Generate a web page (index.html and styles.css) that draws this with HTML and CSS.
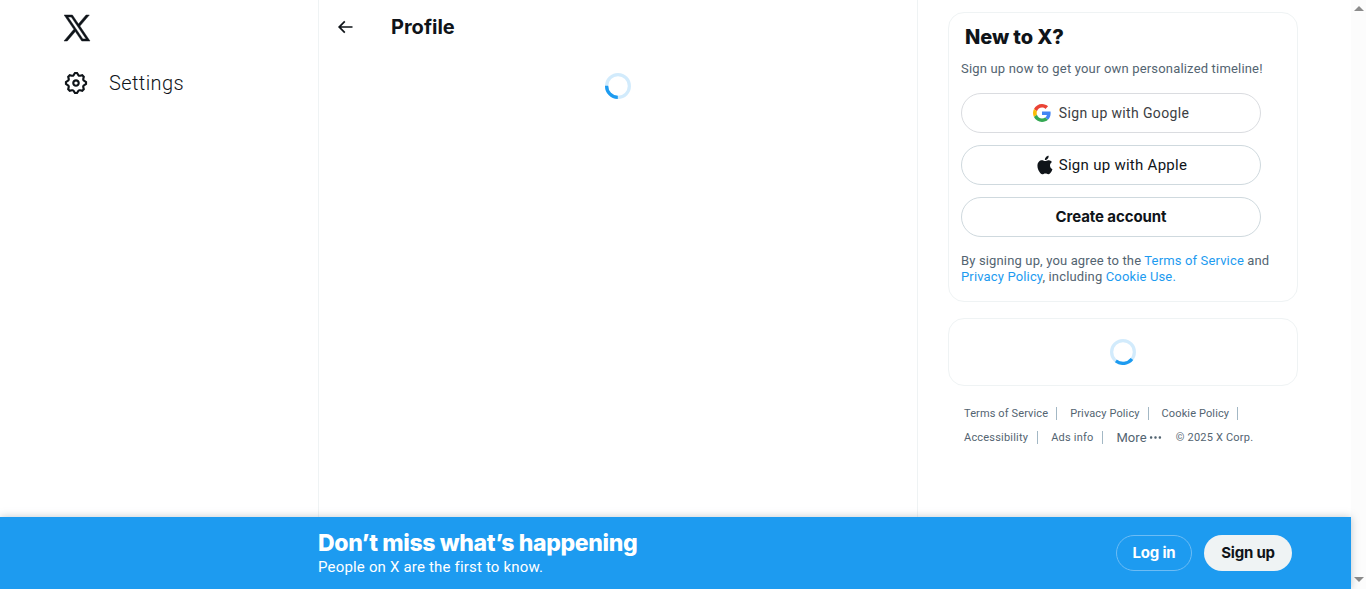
FILE: index.html
```html
<!DOCTYPE html>
<html lang="en">
<head>
<meta charset="utf-8">
<title>Profile / X</title>
<link rel="stylesheet" href="styles.css">
</head>
<body>
<div class="page">
  <div class="layout">
    <header class="nav">
      <svg class="logo" viewBox="0 0 24 24"><path d="M21.742 21.75l-7.563-11.179 7.056-8.321h-2.456l-5.691 6.714-4.54-6.714H2.359l7.29 10.776L2.25 21.75h2.456l6.035-7.118 4.818 7.118h6.191-.008zM7.739 3.818L18.81 20.182h-2.447L5.29 3.818h2.447z"/></svg>
      <a class="nav-item">
        <svg class="gear" viewBox="0 0 24 24"><path d="M10.54 1.75h2.92l1.57 2.36c.11.17.32.25.53.21l2.53-.59 2.17 2.17-.58 2.54c-.05.2.04.41.21.53l2.36 1.57v2.92l-2.36 1.57c-.17.12-.26.33-.21.53l.58 2.54-2.17 2.17-2.53-.59c-.21-.04-.42.04-.53.21l-1.57 2.36h-2.92l-1.58-2.36c-.11-.17-.32-.25-.52-.21l-2.54.59-2.17-2.17.58-2.54c.05-.2-.03-.41-.21-.53l-2.35-1.57v-2.92L4.1 8.97c.18-.12.26-.33.21-.53L3.73 5.9 5.9 3.73l2.54.59c.2.04.41-.04.52-.21l1.58-2.36zm1.07 2l-.98 1.47C10.05 6.08 9 6.5 7.99 6.27l-1.46-.34-.6.6.33 1.46c.24 1.01-.18 2.07-1.05 2.64l-1.46.98v.78l1.46.98c.87.57 1.29 1.63 1.05 2.64l-.33 1.46.6.6 1.46-.34c1.01-.23 2.06.19 2.64 1.05l.98 1.47h.78l.97-1.47c.58-.86 1.63-1.28 2.65-1.05l1.45.34.61-.6-.34-1.46c-.23-1.01.18-2.07 1.05-2.64l1.47-.98v-.78l-1.47-.98c-.87-.57-1.28-1.63-1.05-2.64l.34-1.46-.61-.6-1.45.34c-1.02.23-2.07-.19-2.65-1.05l-.97-1.47h-.78zM12 10.5c-.83 0-1.5.67-1.5 1.5s.67 1.5 1.5 1.5c.82 0 1.5-.67 1.5-1.5s-.68-1.5-1.5-1.5zM8.5 12c0-1.93 1.56-3.5 3.5-3.5 1.93 0 3.5 1.57 3.5 3.5s-1.57 3.5-3.5 3.5c-1.94 0-3.5-1.57-3.5-3.5z"/></svg>
        <span>Settings</span>
      </a>
    </header>

    <main class="main">
      <div class="main-head">
        <svg class="back" viewBox="0 0 24 24"><path d="M7.414 13l5.043 5.04-1.414 1.42L3.586 12l7.457-7.46 1.414 1.42L7.414 11H21v2H7.414z"/></svg>
        <h2>Profile</h2>
      </div>
      <svg class="spinner" viewBox="0 0 32 32"><circle class="track" cx="16" cy="16" r="14"/><circle class="arc arc-left" cx="16" cy="16" r="14"/></svg>
    </main>

    <aside class="side">
      <section class="card signup">
        <h2>New to X?</h2>
        <p class="lead">Sign up now to get your own personalized timeline!</p>
        <a class="pill google">
          <svg viewBox="0 0 48 48"><path fill="#ea4335" d="M24 9.5c3.54 0 6.71 1.22 9.21 3.6l6.85-6.85C35.9 2.38 30.47 0 24 0 14.62 0 6.51 5.38 2.56 13.22l7.98 6.19C12.43 13.72 17.74 9.5 24 9.5z"/><path fill="#4285f4" d="M46.98 24.55c0-1.57-.15-3.09-.38-4.55H24v9.02h12.94c-.58 2.96-2.26 5.48-4.78 7.18l7.73 6c4.51-4.18 7.09-10.36 7.09-17.65z"/><path fill="#fbbc05" d="M10.53 28.59c-.48-1.45-.76-2.99-.76-4.59s.27-3.14.76-4.59l-7.98-6.19C.92 16.46 0 20.12 0 24c0 3.88.92 7.54 2.56 10.78l7.97-6.19z"/><path fill="#34a853" d="M24 48c6.48 0 11.93-2.13 15.89-5.81l-7.73-6c-2.15 1.45-4.92 2.3-8.16 2.3-6.26 0-11.57-4.22-13.47-9.91l-7.98 6.19C6.51 42.62 14.62 48 24 48z"/></svg>
          <span>Sign up with Google</span>
        </a>
        <a class="pill apple">
          <svg viewBox="0 0 24 24"><path d="M16.365 1.43c0 1.14-.493 2.27-1.177 3.08-.744.9-1.99 1.57-2.987 1.57-.12 0-.23-.02-.3-.03-.01-.06-.04-.22-.04-.39 0-1.15.572-2.27 1.206-2.98.804-.94 2.142-1.64 3.248-1.68.03.13.05.28.05.43zm4.565 15.71c-.03.07-.463 1.58-1.518 3.12-.945 1.34-1.94 2.71-3.43 2.71-1.517 0-1.9-.88-3.63-.88-1.698 0-2.302.91-3.67.91-1.377 0-2.332-1.26-3.428-2.8-1.287-1.82-2.323-4.63-2.323-7.28 0-4.28 2.797-6.55 5.552-6.55 1.448 0 2.675.95 3.6.95.865 0 2.222-1.01 3.902-1.01.613 0 2.886.06 4.374 2.19-.13.09-2.383 1.37-2.383 4.19 0 3.26 2.854 4.42 2.955 4.45z"/></svg>
          <span>Sign up with Apple</span>
        </a>
        <a class="pill create"><span>Create account</span></a>
        <p class="terms">By signing up, you agree to the <a>Terms of Service</a> and<br><a>Privacy Policy</a>, including <a>Cookie Use.</a></p>
      </section>

      <section class="card loading">
        <svg class="spinner" viewBox="0 0 32 32"><circle class="track" cx="16" cy="16" r="14"/><circle class="arc arc-bottom" cx="16" cy="16" r="14"/></svg>
      </section>

      <nav class="links">
        <div class="links-row"><a>Terms of Service</a><i></i><a>Privacy Policy</a><i></i><a>Cookie Policy</a><i></i></div>
        <div class="links-row second"><a>Accessibility</a><i></i><a>Ads info</a><i></i><a class="more">More<svg viewBox="0 0 24 24"><path d="M3 12c0-1.1.9-2 2-2s2 .9 2 2-.9 2-2 2-2-.9-2-2zm9 2c1.1 0 2-.9 2-2s-.9-2-2-2-2 .9-2 2 .9 2 2 2zm7 0c1.1 0 2-.9 2-2s-.9-2-2-2-2 .9-2 2 .9 2 2 2z"/></svg></a><span>© 2025 X Corp.</span></div>
      </nav>
    </aside>
  </div>

  <footer class="banner">
    <div class="banner-text">
      <strong>Don’t miss what’s happening</strong>
      <span>People on X are the first to know.</span>
    </div>
    <div class="banner-actions">
      <a class="login">Log in</a>
      <a class="join">Sign up</a>
    </div>
  </footer>
</div>
<div class="scrollbar"><b class="up"></b><b class="down"></b></div>
</body>
</html>
```
FILE: styles.css
```css
* { box-sizing: border-box; margin: 0; padding: 0; }
body {
  display: flex;
  width: 1366px;
  height: 589px;
  overflow: hidden;
  background: #fff;
  color: #0f1419;
  font-family: Roboto, "Liberation Sans", sans-serif;
}
svg { display: block; flex: none; fill: #0f1419; }
h2, strong, .create, .banner-actions { font-family: Inter, Roboto, sans-serif; }

.page { display: flex; flex-direction: column; width: 1351px; height: 589px; }
.layout { display: flex; height: 517px; }

.nav { width: 318px; padding: 12px 0 0 61px; }
.logo { width: 32px; height: 32px; stroke: #0f1419; stroke-width: .35; }
.nav-item { display: flex; align-items: center; gap: 20px; height: 52px; margin: 13px 0 0 2px; font-size: 20px; font-weight: 350; letter-spacing: .4px; }
.gear { width: 26px; height: 26px; }

.main { width: 600px; border: solid #eff3f4; border-width: 0 1px; }
.main-head { display: flex; align-items: center; height: 53px; padding-left: 16px; }
.back { width: 20px; height: 20px; }
.main-head h2 { margin-left: 36px; font-size: 20px; line-height: 24px; font-weight: 700; }
.spinner { width: 26px; height: 26px; fill: none; stroke: #1d9bf0; stroke-width: 4; }
.track { opacity: .2; }
.arc { stroke-dasharray: 22 66; }
.arc-left { transform: rotate(91deg); transform-origin: center; }
.arc-bottom { transform: rotate(38deg); transform-origin: center; }
.main .spinner { margin: 20px auto 0; }

.side { width: 350px; margin-left: 30px; padding-top: 12px; }
.card { border: 1px solid #eff3f4; border-radius: 16px; }
.signup { height: 290px; padding: 12px; }
.signup h2 { margin-left: 4px; font-size: 20px; line-height: 24px; font-weight: 800; letter-spacing: -.1px; }
.lead { margin: 12px 0 16px; color: #536471; font-size: 13px; line-height: 16px; letter-spacing: .18px; white-space: nowrap; }
.pill { display: flex; align-items: center; justify-content: center; width: 300px; height: 40px; margin-bottom: 12px; border: 1px solid #cfd9de; border-radius: 20px; font-size: 15px; }
.google { gap: 8px; border-color: #dadce0; color: #3c4043; font-size: 14px; letter-spacing: .36px; }
.google svg { width: 18px; height: 18px; }
.apple { gap: 4px; letter-spacing: .28px; }
.apple svg { width: 20px; height: 20px; }
.create { padding-bottom: 1px; font-weight: 700; letter-spacing: -.1px; }
.terms { margin-top: 16px; color: #536471; font-size: 13px; line-height: 16px; letter-spacing: .15px; white-space: nowrap; }
.terms a { color: #1d9bf0; }

.loading { display: flex; align-items: center; justify-content: center; height: 68px; margin-top: 16px; }

.links { margin-top: 15px; padding-left: 16px; color: #536471; font-size: 11px; letter-spacing: .12px; }
.links-row { display: flex; align-items: center; height: 24px; white-space: nowrap; }
.links-row i { width: 1px; height: 13px; margin: 1px 13px 0 8px; background: #a3b8c5; }
.second { letter-spacing: .2px; }
.second i { margin-left: 9px; }
.more { display: flex; align-items: center; gap: 1px; margin-right: 13px; font-size: 13px; letter-spacing: .1px; }
.more svg { width: 15px; height: 15px; margin-top: 1px; fill: #536471; }

.banner { position: relative; display: flex; align-items: center; justify-content: space-between; height: 72px; padding: 0 59px 0 318px; background: #1d9bf0; color: #fff; box-shadow: 0 0 8px rgba(101, 119, 134, .4); }
.banner-text { display: flex; flex-direction: column; }
.banner-text strong { font-size: 23px; line-height: 28px; font-weight: 800; letter-spacing: -.35px; }
.banner-text span { font-size: 15px; line-height: 20px; letter-spacing: .18px; }
.banner-actions { display: flex; gap: 12px; font-size: 15px; font-weight: 700; letter-spacing: -.2px; }
.banner-actions a { display: flex; align-items: center; justify-content: center; height: 36px; padding-bottom: 1px; border-radius: 18px; }
.login { width: 76px; border: 1px solid #6cbcf5; }
.join { width: 88px; background: #eff3f4; color: #0f1419; }

.scrollbar { display: flex; flex-direction: column; justify-content: space-between; align-items: center; width: 15px; height: 589px; padding: 6px 0 7px; background: #fcfcfc; }
.up, .down { border: solid transparent; border-width: 0 5px; }
.up { border-bottom: 5px solid #8b8b8b; }
.down { border-top: 5px solid #8b8b8b; }
```
